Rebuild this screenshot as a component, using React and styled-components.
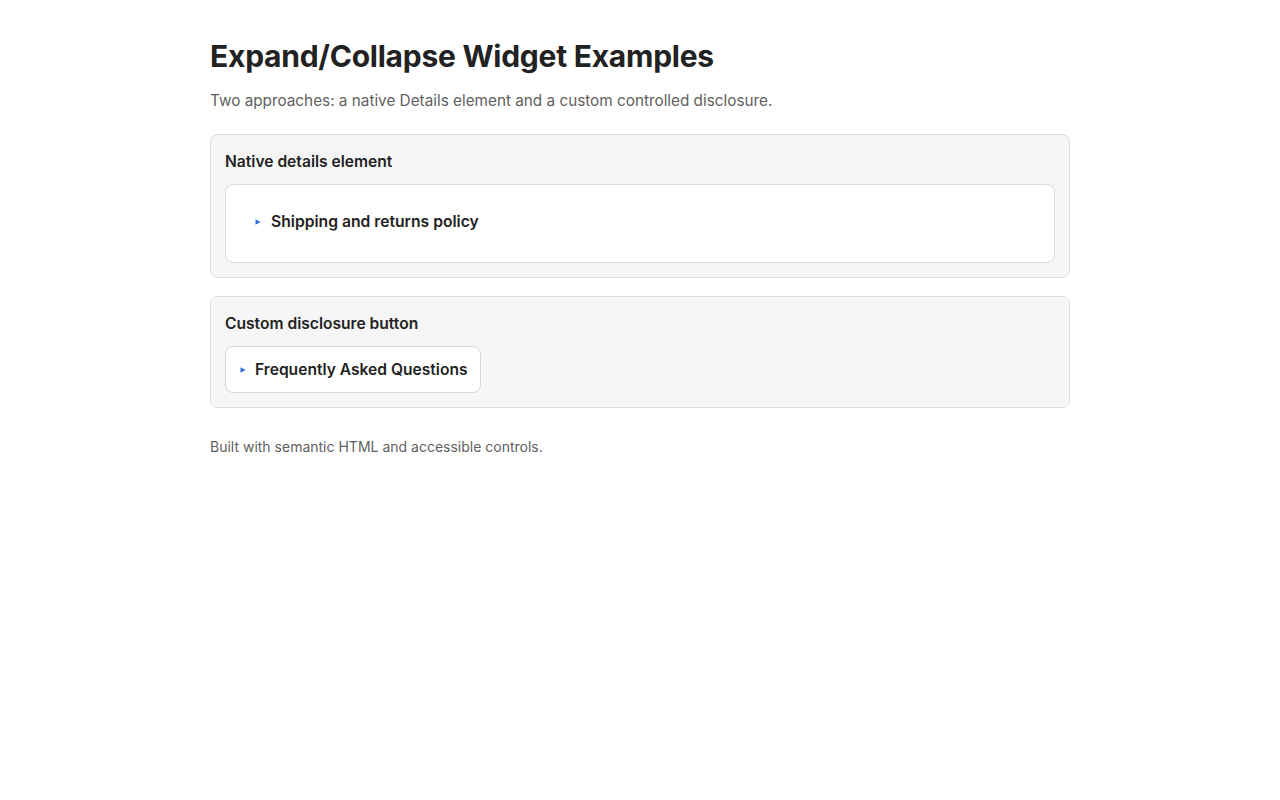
import React, { useState } from "react";
import styled, { createGlobalStyle } from "styled-components";

const Global = createGlobalStyle`
  html, body { margin: 0; padding: 0; background: #fff; }
  body { font-family: Inter, "Noto Sans", "Liberation Sans", sans-serif; color: #222; }
  * { box-sizing: border-box; }
`;

const Page = styled.main`
  width: 860px;
  margin: 0 auto;
  padding-top: 38px;
`;

const Title = styled.h1`
  margin: 0;
  font-size: 30px;
  line-height: 36px;
  font-weight: 700;
  letter-spacing: -0.25px;
  color: #222;
`;

const Lead = styled.p`
  margin: 16px 0 0;
  font-size: 15.3px;
  line-height: 22px;
  color: #5f5f5f;
`;

const Stack = styled.div`
  display: flex;
  flex-direction: column;
  gap: 18px;
  margin-top: 22px;
`;

const Card = styled.section`
  background: #f6f6f6;
  border: 1px solid #dcdcdc;
  border-radius: 8px;
  padding: 16px 14px 14px;
`;

const CardTitle = styled.h2`
  margin: 0 0 11px;
  font-size: 15.6px;
  line-height: 22px;
  font-weight: 600;
  color: #222;
`;

const Details = styled.details`
  background: #fff;
  border: 1px solid #dcdcdc;
  border-radius: 8px;
  padding: 17px 16px 20px;
`;

const Summary = styled.summary`
  list-style: none;
  display: flex;
  align-items: center;
  gap: 10px;
  padding: 9px 13px;
  font-size: 15.7px;
  line-height: 22px;
  font-weight: 600;
  color: #222;
  cursor: pointer;
  &::-webkit-details-marker { display: none; }
`;

const Button = styled.button`
  display: inline-flex;
  align-items: center;
  gap: 9px;
  padding: 12px 12px 11px 14px;
  background: #fff;
  border: 1px solid #d6d6d6;
  border-radius: 8px;
  font-family: inherit;
  font-size: 15.6px;
  line-height: 22px;
  font-weight: 600;
  color: #222;
  cursor: pointer;
`;

const Row = styled.div`
  display: flex;
`;

const Panel = styled.div`
  margin-top: 10px;
  font-size: 15px;
  color: #444;
`;

const Footer = styled.p`
  margin: 29px 0 0;
  font-size: 14px;
  line-height: 20px;
  color: #5f5f5f;
`;

const Caret = ({ open }) => (
  <svg width="6" height="6" viewBox="0 0 6 6" style={{ transform: open ? "rotate(90deg)" : "none", flex: "none" }}>
    <path d="M0.5 0.3 L5.6 3 L0.5 5.7 Z" fill="#2f6fe4" />
  </svg>
);

export default function App() {
  const [open, setOpen] = useState(false);
  const [nOpen, setNOpen] = useState(false);
  return (
    <>
      <Global />
      <Page>
        <Title>Expand/Collapse Widget Examples</Title>
        <Lead>Two approaches: a native Details element and a custom controlled disclosure.</Lead>
        <Stack>
          <Card>
            <CardTitle>Native details element</CardTitle>
            <Details onToggle={(e) => setNOpen(e.currentTarget.open)}>
              <Summary>
                <Caret open={nOpen} />
                Shipping and returns policy
              </Summary>
              <Panel>Orders ship within 2 business days. Returns are accepted within 30 days.</Panel>
            </Details>
          </Card>
          <Card>
            <CardTitle>Custom disclosure button</CardTitle>
            <Row>
              <Button aria-expanded={open} onClick={() => setOpen(!open)}>
                <Caret open={open} />
                Frequently Asked Questions
              </Button>
            </Row>
            {open && <Panel>Answers to common questions appear here.</Panel>}
          </Card>
        </Stack>
        <Footer>Built with semantic HTML and accessible controls.</Footer>
      </Page>
    </>
  );
}
